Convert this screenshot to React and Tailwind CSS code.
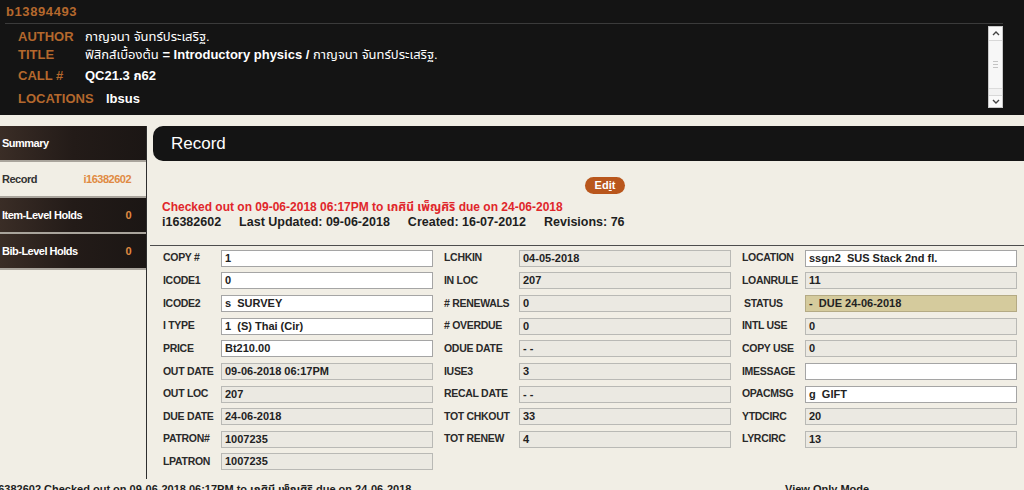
import React from 'react';

const font = { fontFamily: '"Liberation Sans", Arial, "Noto Sans Thai", "DejaVu Sans", sans-serif' };

const tones = {
  edit: 'bg-white border-[#a5a5a5]',
  ro: 'bg-[#ebe9e2] border-[#b9b9b5]',
  status: 'bg-[#d5cb9d] border-[#b4aa84]',
};

const columns = [
  {
    labelW: 'w-[58px]',
    fields: [
      ['COPY #', '1', 'edit'],
      ['ICODE1', '0', 'edit'],
      ['ICODE2', 's  SURVEY', 'edit'],
      ['I TYPE', '1  (S) Thai (Cir)', 'edit'],
      ['PRICE', 'Bt210.00', 'edit'],
      ['OUT DATE', '09-06-2018 06:17PM', 'ro'],
      ['OUT LOC', '207', 'ro'],
      ['DUE DATE', '24-06-2018', 'ro'],
      ['PATRON#', '1007235', 'ro'],
      ['LPATRON', '1007235', 'ro'],
    ],
  },
  {
    labelW: 'w-[75px]',
    fields: [
      ['LCHKIN', '04-05-2018', 'ro'],
      ['IN LOC', '207', 'ro'],
      ['# RENEWALS', '0', 'ro'],
      ['# OVERDUE', '0', 'ro'],
      ['ODUE DATE', '- -', 'ro'],
      ['IUSE3', '3', 'ro'],
      ['RECAL DATE', '- -', 'ro'],
      ['TOT CHKOUT', '33', 'ro'],
      ['TOT RENEW', '4', 'ro'],
    ],
  },
  {
    labelW: 'w-[63px]',
    fields: [
      ['LOCATION', 'ssgn2  SUS Stack 2nd fl.', 'edit'],
      ['LOANRULE', '11', 'ro'],
      ['STATUS', '-  DUE 24-06-2018', 'status'],
      ['INTL USE', '0', 'ro'],
      ['COPY USE', '0', 'ro'],
      ['IMESSAGE', '', 'edit'],
      ['OPACMSG', 'g  GIFT', 'edit'],
      ['YTDCIRC', '20', 'ro'],
      ['LYRCIRC', '13', 'ro'],
    ],
  },
];

const navItems = [
  { label: 'Summary', value: '', dark: true },
  { label: 'Record', value: 'i16382602', dark: false },
  { label: 'Item-Level Holds', value: '0', dark: true },
  { label: 'Bib-Level Holds', value: '0', dark: true },
];

const Field = ({ label, value, tone, labelW }) => (
  <div className="flex h-[22.63px] items-center">
    <div className={`${labelW} text-[10.5px] font-bold tracking-[-0.3px] text-[#2a2a2a] whitespace-nowrap ${label === 'STATUS' ? 'pl-[2px]' : ''}`}>
      {label}
    </div>
    <div className={`h-[17px] w-[212px] border px-[3px] text-[11px] font-bold leading-[15px] text-[#222] whitespace-pre ${tones[tone]}`}>
      {value}
    </div>
  </div>
);

const ScrollBar = () => (
  <div className="mt-[2px] flex h-[82px] w-[15px] flex-col border border-[#c9c9c9] bg-[#f2f2f2]">
    <div className="flex h-[14px] items-center justify-center border-b border-[#d8d8d8] bg-[#fafafa]">
      <svg width="8" height="5" viewBox="0 0 8 5"><path d="M1 4 L4 1 L7 4" fill="none" stroke="#444" strokeWidth="1.4" /></svg>
    </div>
    <div className="flex h-[48px] items-center justify-center border-b border-[#dcdcdc] bg-[#f7f7f7]">
      <div className="flex flex-col gap-[2px]">
        <div className="h-px w-[5px] bg-[#c4c4c4]" />
        <div className="h-px w-[5px] bg-[#c4c4c4]" />
        <div className="h-px w-[5px] bg-[#c4c4c4]" />
      </div>
    </div>
    <div className="flex-1" />
    <div className="flex h-[12px] items-center justify-center border-t border-[#d8d8d8] bg-[#fafafa]">
      <svg width="8" height="5" viewBox="0 0 8 5"><path d="M1 1 L4 4 L7 1" fill="none" stroke="#444" strokeWidth="1.4" /></svg>
    </div>
  </div>
);

export default function App() {
  return (
    <div className="h-[490px] w-[1024px] overflow-hidden bg-[#f1eee5]" style={font}>
      {/* bib header */}
      <div className="h-[115px] bg-[#141414]">
        <div className="h-[23px] pl-[6px] pt-[2px] text-[13px] font-bold leading-[20px] tracking-[0.6px] text-[#b4682d]">
          b13894493
        </div>
        <div className="ml-[5px] mr-[21px] flex border-t border-[#3b3b3b]">
          <div className="flex-1 pl-[13px] pt-[3px] text-[13px] leading-[20px]">
            <div className="flex h-[18px]">
              <span className="w-[67px] font-bold text-[#b4682d]">AUTHOR</span>
              <span className="text-white">กาญจนา จันทร์ประเสริฐ.</span>
            </div>
            <div className="flex h-[21px]">
              <span className="w-[67px] font-bold text-[#b4682d]">TITLE</span>
              <span className="text-white">
                ฟิสิกส์เบื้องต้น <b>= Introductory physics /</b> กาญจนา จันทร์ประเสริฐ.
              </span>
            </div>
            <div className="flex h-[23px]">
              <span className="w-[67px] font-bold text-[#b4682d]">CALL #</span>
              <span className="font-bold text-white">QC21.3 ก62</span>
            </div>
            <div className="flex h-[20px]">
              <span className="w-[88px] font-bold text-[#b4682d]">LOCATIONS</span>
              <span className="font-bold text-white">lbsus</span>
            </div>
          </div>
          <ScrollBar />
        </div>
      </div>

      {/* body */}
      <div className="flex pt-[11px]">
        <div className="w-[147px] border-r border-[#2e2e2e]">
          {navItems.map((item) => (
            <div
              key={item.label}
              className={`flex h-[36px] items-center justify-between border-b-2 border-[#a9a49c] pl-[2px] pr-[15px] text-[11px] font-bold tracking-[-0.5px] ${
                item.dark ? 'bg-gradient-to-r from-[#3a2d26] via-[#231b18] to-[#1b1614] text-white' : 'bg-[#f1eee5] text-[#333]'
              }`}
            >
              <span>{item.label}</span>
              <span className="text-[#e08a42]">{item.value}</span>
            </div>
          ))}
        </div>

        <div className="flex-1">
          <div className="ml-[6px] flex h-[35px] items-center rounded-l-[10px] bg-[#141414] pl-[18px] text-[17px] text-white">
            Record
          </div>

          <div className="mt-[16px] ml-[438px] flex h-[17px] w-[40px] items-center justify-center rounded-full bg-[#b9561c] text-[11px] font-bold text-white">
            Ed<span className="underline">i</span>t
          </div>

          <div className="mt-[6px] pl-[15px] font-bold leading-[15px]">
            <div className="text-[12px] text-[#e0262b]">Checked out on 09-06-2018 06:17PM to เกศินี เพ็ญศิริ due on 24-06-2018</div>
            <div className="flex gap-[18px] text-[12.5px] text-[#1e1e1e]">
              <span>i16382602</span>
              <span>Last Updated: 09-06-2018</span>
              <span>Created: 16-07-2012</span>
              <span>Revisions: 76</span>
            </div>
          </div>

          <div className="mt-[15px] ml-[3px] h-px bg-[#4d4d4d]" />

          <div className="flex gap-[11px] pl-[16px] pt-[1px] pb-[6px]">
            {columns.map((col, i) => (
              <div key={i} className="flex flex-col">
                {col.fields.map(([label, value, tone]) => (
                  <Field key={label} label={label} value={value} tone={tone} labelW={col.labelW} />
                ))}
              </div>
            ))}
          </div>
        </div>
      </div>

      {/* status line */}
      <div className="mt-[3px] flex text-[11px] font-bold leading-[15px] text-[#1e1e1e] whitespace-nowrap">
        <span className="ml-[-11px] w-[796px]">i16382602 Checked out on 09-06-2018 06:17PM to เกศินี เพ็ญศิริ due on 24-06-2018</span>
        <span>View Only Mode</span>
      </div>
    </div>
  );
}
